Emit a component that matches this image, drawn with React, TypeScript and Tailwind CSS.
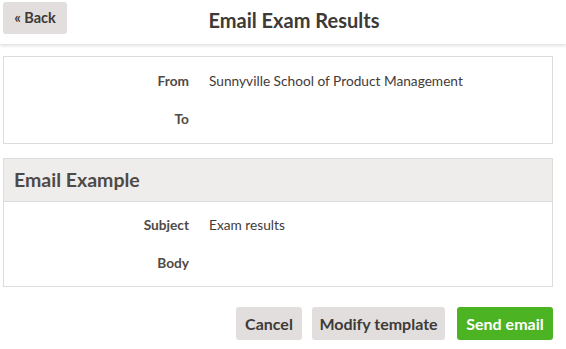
import React from "react";

const font = { fontFamily: "Lato, 'Liberation Sans', sans-serif" };

function Row({ label, value }: { label: string; value?: string }) {
  return (
    <div className="flex items-center h-[38px] text-[13.7px]">
      <div className="w-[185px] text-right font-bold text-[#4f4a47]">{label}</div>
      <div className="ml-[20px] text-[#3f3b39]">{value}</div>
    </div>
  );
}

export default function App() {
  return (
    <div className="w-[566px] h-[349px] bg-white relative overflow-hidden" style={font}>
      <div className="h-[44px] flex items-center relative shadow-[0_2px_3px_rgba(0,0,0,0.12)] bg-white">
        <button className="ml-[3px] mt-[-8px] h-[32px] w-[64px] rounded-[3px] bg-[#e2dedd] text-[#3d3a38] font-bold text-[14.5px]">
          « Back
        </button>
        <div className="absolute left-0 right-0 top-[5px] text-center pl-[22px] text-[20px] font-bold text-[#3d3a38] pointer-events-none">
          Email Exam Results
        </div>
      </div>
      <div className="px-[3px] pr-[13px] pt-[12px]">
        <div className="border border-[#dcdcdc] py-[5px]">
          <Row label="From" value="Sunnyville School of Product Management" />
          <Row label="To" />
        </div>
        <div className="border border-[#dcdcdc] mt-[14px]">
          <div className="h-[43px] bg-[#efedeb] border-b border-[#dcdcdc] flex items-center px-[10px] text-[19.5px] font-bold text-[#4f4a47]">
            Email Example
          </div>
          <div className="py-[4px]">
            <Row label="Subject" value="Exam results" />
            <Row label="Body" />
          </div>
        </div>
        <div className="flex justify-end mt-[20px] text-[16px] font-bold">
          <button className="h-[33px] w-[66px] rounded-[3px] bg-[#e2dedd] text-[#3d3a38]">Cancel</button>
          <button className="h-[33px] w-[133px] ml-[10px] rounded-[3px] bg-[#e2dedd] text-[#3d3a38]">Modify template</button>
          <button className="h-[33px] w-[96px] ml-[12px] rounded-[3px] bg-[#4cb322] text-white">Send email</button>
        </div>
      </div>
    </div>
  );
}
